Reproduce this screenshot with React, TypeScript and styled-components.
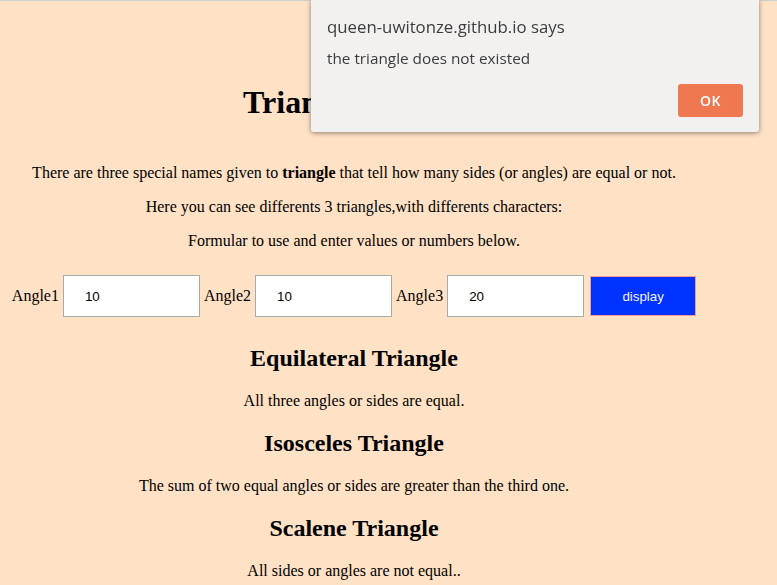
import React, {useState} from "react";
import styled, {createGlobalStyle} from "styled-components";

const GlobalStyle = createGlobalStyle`
  html {
    border-top: 1px solid #cdcdcd;
    background: #FFE1C6;
  }
  body {
    margin: 8px;
    background: #FFE1C6;
    font-family: "Liberation Serif", "Times New Roman", serif;
    font-size: 16px;
    color: #000;
  }
`;

const Page = styled.main`
  width: 692px;
  text-align: center;
`;

const Title = styled.h1`
  font-size: 32px;
  margin: 75px 0 43px;
`;

const Text = styled.p`
  margin: 16px 0;
`;

const Heading = styled.h2`
  font-size: 24px;
  margin: 19.92px 0;
`;

const AngleRow = styled.form`
  display: flex;
  align-items: center;
  justify-content: center;
  gap: 4px;
  margin: 25px 0 28px;
`;

const Label = styled.label`
  white-space: nowrap;
`;

const AngleInput = styled.input`
  box-sizing: border-box;
  width: 137px;
  height: 42px;
  padding: 0 20px 0 21px;
  border: 1px solid #a9a9a9;
  background: #fff;
  font-family: "Liberation Sans", Arial, sans-serif;
  font-size: 13.33px;
  color: #000;
  outline: none;
`;

const DisplayButton = styled.button`
  box-sizing: border-box;
  width: 106px;
  height: 40px;
  margin-left: 2px;
  background: #0033ff;
  border: 1px solid #f19a94;
  color: #f2f2ff;
  font-family: "Liberation Sans", Arial, sans-serif;
  font-size: 13.33px;
  cursor: pointer;
`;

const Dialog = styled.div`
  position: fixed;
  top: 0;
  left: 311px;
  width: 448px;
  height: 132px;
  box-sizing: border-box;
  padding: 17px 16px 15px;
  display: flex;
  flex-direction: column;
  background: #f2f1f0;
  border-radius: 0 0 3px 3px;
  box-shadow: 0 1px 5px rgba(0, 0, 0, 0.45);
  font-family: "Open Sans", "Noto Sans", sans-serif;
  color: #3c3c3c;
`;

const DialogTitle = styled.div`
  font-size: 16.8px;
  line-height: 20px;
`;

const DialogMessage = styled.div`
  margin-top: 11px;
  font-size: 15.3px;
  line-height: 20px;
`;

const DialogActions = styled.div`
  display: flex;
  justify-content: flex-end;
  margin-top: 16px;
`;

const OkButton = styled.button`
  width: 65px;
  height: 33px;
  border: none;
  border-radius: 3px;
  background: #f07850;
  color: #fff;
  font-family: "Open Sans", "Noto Sans", sans-serif;
  font-weight: 600;
  font-size: 14px;
  letter-spacing: 0.5px;
  cursor: pointer;
`;

export default function App() {
    const [angles, setAngles] = useState<string[]>(["10", "10", "20"]);
    const [showAlert, setShowAlert] = useState<boolean>(true);

    const changeAngle = (index: number, value: string): void => {
        let temp: string[] = angles.slice();
        temp[index] = value;
        setAngles(temp);
    };

    return (
        <>
            <GlobalStyle/>
            <Page>
                <Title>Triangle Project</Title>
                <Text>
                    There are three special names given to <b>triangle</b> that tell how many sides (or angles) are equal or not.
                </Text>
                <Text>Here you can see differents 3 triangles,with differents characters:</Text>
                <Text>Formular to use and enter values or numbers below.</Text>
                <AngleRow onSubmit={(e) => e.preventDefault()}>
                    {angles.map((angle: string, index: number) => (
                        <React.Fragment key={index}>
                            <Label htmlFor={"angle" + (index + 1)}>Angle{index + 1}</Label>
                            <AngleInput id={"angle" + (index + 1)} value={angle}
                                        onChange={(e) => changeAngle(index, e.target.value)}/>
                        </React.Fragment>
                    ))}
                    <DisplayButton type="button" onClick={() => setShowAlert(true)}>display</DisplayButton>
                </AngleRow>
                <Heading>Equilateral Triangle</Heading>
                <Text>All three angles or sides are equal.</Text>
                <Heading>Isosceles Triangle</Heading>
                <Text>The sum of two equal angles or sides are greater than the third one.</Text>
                <Heading>Scalene Triangle</Heading>
                <Text>All sides or angles are not equal..</Text>
            </Page>
            {showAlert && (
                <Dialog>
                    <DialogTitle>queen-uwitonze.github.io says</DialogTitle>
                    <DialogMessage>the triangle does not existed</DialogMessage>
                    <DialogActions>
                        <OkButton onClick={() => setShowAlert(false)}>OK</OkButton>
                    </DialogActions>
                </Dialog>
            )}
        </>
    );
}
